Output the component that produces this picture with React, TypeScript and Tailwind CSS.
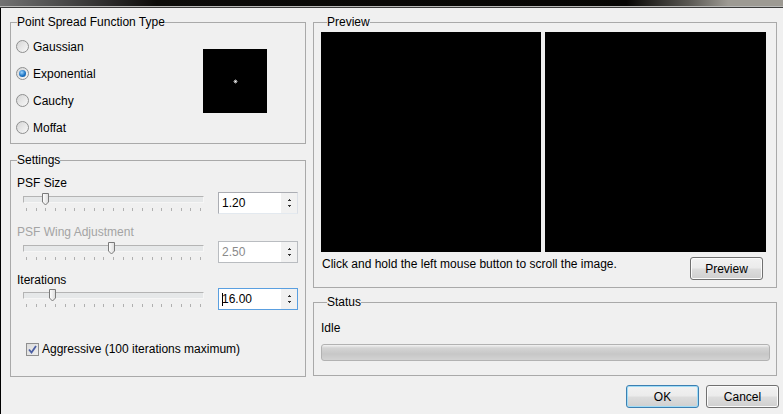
import React from "react";

const font = { fontFamily: '"Liberation Sans", Arial, sans-serif' };

const Radio: React.FC<{ label: string; checked?: boolean }> = ({ label, checked }) => (
  <div className="h-[27px] flex items-center">
    <div className="w-[13px] h-[13px] rounded-full border border-[#8e8f8f] bg-[linear-gradient(135deg,#d6d6d6,#f8f8f8)] flex items-center justify-center">
      {checked && (
        <div className="w-[7px] h-[7px] rounded-full bg-[radial-gradient(circle_at_40%_35%,#9fd6ff,#1c74c4_55%,#0d4f94)]" />
      )}
    </div>
    <span className="ml-[4px] text-[12px] leading-[14px] text-black">{label}</span>
  </div>
);

const Slider: React.FC<{ pos: number }> = ({ pos }) => (
  <div className="relative w-[181px] ml-[12px]">
    <div className="mt-[4px] h-[7px] border border-[#b4b4b4] border-b-[#f6f6f6] border-r-[#f6f6f6] bg-[#e6e8e9]" />
    <div className="mt-[5px] px-[3px] flex justify-between">
      {Array.from({ length: 19 }).map((_, i) => (
        <div key={i} className="w-px h-[3px] bg-[#b0b0b0]" />
      ))}
    </div>
    {/* thumb */}
    <svg className="absolute top-[1px]" style={{ left: pos }} width="7" height="13" viewBox="0 0 7 13">
      <defs>
        <linearGradient id="th" x1="0" x2="1">
          <stop offset="0" stopColor="#ffffff" />
          <stop offset="1" stopColor="#dcdcdc" />
        </linearGradient>
      </defs>
      <path d="M0.5 0.5 H6.5 V9 L3.5 12 L0.5 9 Z" fill="url(#th)" stroke="#7a7a7a" />
    </svg>
  </div>
);

const Spin: React.FC<{ value: string; disabled?: boolean; focused?: boolean }> = ({ value, disabled, focused }) => (
  <div
    className={`ml-[14px] w-[80px] h-[22px] flex bg-white border ${
      focused ? "border-[#5a9fe0]" : disabled ? "border-[#b9bcc0]" : "border-[#abadb3] border-b-[#e3e9ef] border-r-[#dbdfe6]"
    }`}
  >
    <div className={`flex-1 flex items-center pl-[3px] text-[12px] leading-[14px] ${disabled ? "text-[#8a8a8a]" : "text-black"}`}>
      {focused && <span className="w-px h-[13px] bg-black -mr-px" />}
      {value}
    </div>
    <div className="w-[16px] bg-[#f1f1f1] flex flex-col items-center justify-center gap-[4px]">
      <svg width="3" height="2" viewBox="0 0 3 2"><path d="M1 0h1v1h1v1H0V1h1z" fill="#333" /></svg>
      <svg width="3" height="2" viewBox="0 0 3 2"><path d="M0 0h3v1H2v1H1V1H0z" fill="#333" /></svg>
    </div>
  </div>
);

const Button: React.FC<{ label: string; focused?: boolean; className?: string }> = ({ label, focused, className }) => (
  <div
    className={`w-[73px] h-[23px] shrink-0 rounded-[3px] border flex items-center justify-center text-[12px] leading-[14px] text-black bg-[linear-gradient(to_bottom,#f2f2f2_0%,#ebebeb_48%,#dddddd_52%,#cfcfcf_100%)] ${
      focused ? "border-[#3c7fb1] shadow-[inset_0_0_0_1px_#9fdcf7]" : "border-[#707070] shadow-[inset_0_0_0_1px_#fbfbfb]"
    } ${className ?? ""}`}
  >
    {label}
  </div>
);

const Legend: React.FC<{ text: string }> = ({ text }) => (
  <legend className="ml-[6px] px-0 text-[12px] leading-[14px] text-black">{text}</legend>
);

export default function App() {
  return (
    <div className="w-[783px] h-[414px] bg-[#f0f0f0] overflow-hidden flex flex-col" style={font}>
      <div className="h-[6px] bg-[linear-gradient(to_right,#727272_0%,#4a4a4a_8%,#0c0b09_20%,#060503_80%,#5a5853_88%,#9d9a93_93%,#9d9a93_100%)]" />
      <div className="h-px bg-[#b8b8b6]" />
      <div className="h-px bg-[#3c3c3c]" />
      <div className="flex-1 border-l border-black flex flex-col">
        <div className="flex pl-[9px] gap-[7px]">
          {/* left column */}
          <div className="w-[296px] flex flex-col">
            <fieldset className="mt-[7px] h-[129px] min-w-0 border border-[#a9a9a9] flex">
              <Legend text="Point Spread Function Type" />
              <div className="flex-1 flex flex-col pl-[5px] pt-[4px]">
                <Radio label="Gaussian" />
                <Radio label="Exponential" checked />
                <Radio label="Cauchy" />
                <Radio label="Moffat" />
              </div>
              <div className="mt-[20px] mr-[38px] w-[64px] h-[64px] bg-black flex items-center justify-center">
                <svg width="5" height="5" viewBox="0 0 5 5">
                  <rect x="2" y="0" width="1" height="5" fill="#555" />
                  <rect x="0" y="2" width="5" height="1" fill="#555" />
                  <rect x="1" y="1" width="3" height="3" fill="#999" />
                  <rect x="2" y="2" width="1" height="1" fill="#fff" />
                </svg>
              </div>
            </fieldset>
            <fieldset className="mt-[9px] h-[224px] min-w-0 border border-[#a9a9a9] flex flex-col pt-[9px]">
              <Legend text="Settings" />
              <div className="pl-[6px] text-[12px] leading-[14px] text-black">PSF Size</div>
              <div className="mt-[2px] flex items-start">
                <Slider pos={19} />
                <Spin value="1.20" />
              </div>
              <div className="mt-[11px] pl-[6px] text-[12px] leading-[14px] text-[#a4a4a4]">PSF Wing Adjustment</div>
              <div className="mt-[2px] flex items-start">
                <Slider pos={85} />
                <Spin value="2.50" disabled />
              </div>
              <div className="mt-[10px] pl-[6px] text-[12px] leading-[14px] text-black">Iterations</div>
              <div className="mt-[1px] flex items-start">
                <Slider pos={26} />
                <Spin value="16.00" focused />
              </div>
              <div className="mt-[32px] ml-[15px] flex items-center">
                <div className="w-[13px] h-[13px] border border-[#8f8f8f] bg-[linear-gradient(135deg,#dcdcdc,#eeeeee)] flex items-center justify-center">
                  <svg width="9" height="9" viewBox="0 0 9 9">
                    <path d="M1 4.5 L3.5 7.5 L8 1" fill="none" stroke="#4b5ea3" strokeWidth="1.8" />
                  </svg>
                </div>
                <span className="ml-[3px] text-[12px] leading-[14px] text-black">Aggressive (100 iterations maximum)</span>
              </div>
            </fieldset>
          </div>

          {/* right column */}
          <div className="w-[464px] flex flex-col">
            <fieldset className="mt-[7px] h-[273px] min-w-0 border border-[#a9a9a9] flex flex-col pl-[7px]">
              <Legend text="Preview" />
              <div className="mt-[3px] flex gap-[4px]">
                <div className="w-[220px] h-[220px] bg-black shrink-0" />
                <div className="w-[221px] h-[220px] bg-black shrink-0" />
              </div>
              <div className="mt-[5px] flex items-start justify-between">
                <span className="pl-px text-[12px] leading-[14px] text-black">
                  Click and hold the left mouse button to scroll the image.
                </span>
                <Button label="Preview" className="mr-[13px]" />
              </div>
            </fieldset>
            <fieldset className="mt-[7px] h-[81px] min-w-0 border border-[#a9a9a9] flex flex-col pl-[7px]">
              <Legend text="Status" />
              <div className="mt-[12px] text-[12px] leading-[14px] text-black">Idle</div>
              <div className="mt-[9px] w-[449px] h-[17px] rounded-[3px] border border-[#b2b2b2] bg-[linear-gradient(to_bottom,#f3f3f3_0%,#d4d4d4_20%,#c7c7c7_60%,#d3d3d3_100%)]" />
            </fieldset>
          </div>
        </div>
        <div className="mt-[8px] flex justify-end gap-[7px] pr-[4px]">
          <Button label="OK" focused />
          <Button label="Cancel" />
        </div>
      </div>
    </div>
  );
}
